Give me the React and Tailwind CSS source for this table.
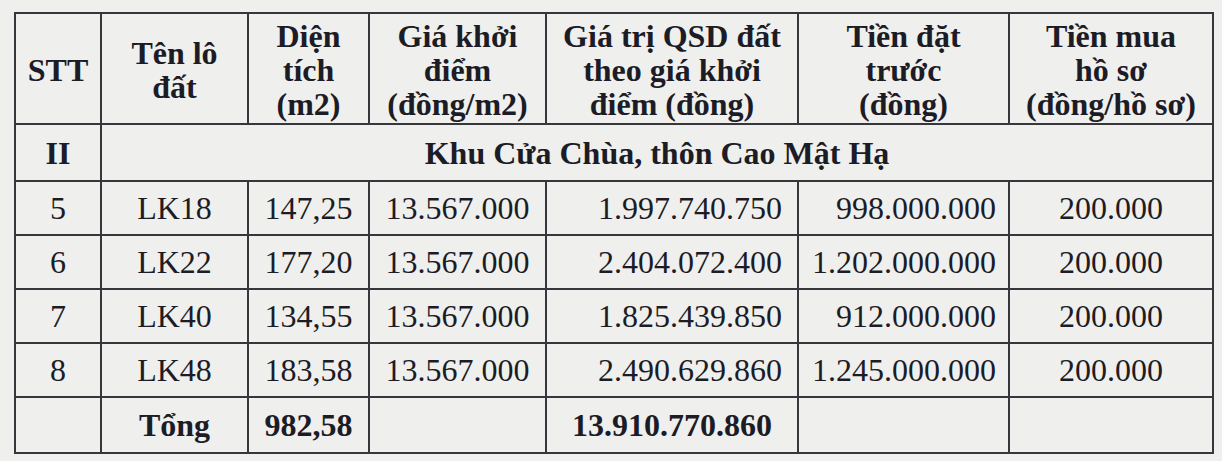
const rows = [
  { stt: '5', lo: 'LK18', dt: '147,25', gia: '13.567.000', qsd: '1.997.740.750', dat: '998.000.000', hs: '200.000' },
  { stt: '6', lo: 'LK22', dt: '177,20', gia: '13.567.000', qsd: '2.404.072.400', dat: '1.202.000.000', hs: '200.000' },
  { stt: '7', lo: 'LK40', dt: '134,55', gia: '13.567.000', qsd: '1.825.439.850', dat: '912.000.000', hs: '200.000' },
  { stt: '8', lo: 'LK48', dt: '183,58', gia: '13.567.000', qsd: '2.490.629.860', dat: '1.245.000.000', hs: '200.000' },
];

const cell = 'border-2 border-[#36363c] p-0';

export default function App() {
  return (
    <div className="w-[1222px] h-[461px] bg-[#efefed] pt-[12px] pl-[14px] text-[#1c1c26] font-[family-name:'Liberation_Serif','Times_New_Roman',serif]">
      <table className="border-collapse table-fixed w-[1198px] text-[32px] leading-[34px]">
        <colgroup>
          <col className="w-[86px]" />
          <col className="w-[147px]" />
          <col className="w-[121px]" />
          <col className="w-[177px]" />
          <col className="w-[252px]" />
          <col className="w-[211px]" />
          <col className="w-[204px]" />
        </colgroup>
        <thead>
          <tr className="h-[111px] font-bold text-center">
            <th className={`${cell} pt-[2px]`}>STT</th>
            <th className={`${cell} pt-[2px]`}>Tên lô<br />đất</th>
            <th className={`${cell} pt-[2px]`}>Diện<br />tích<br />(m2)</th>
            <th className={`${cell} pt-[2px]`}>Giá khởi<br />điểm<br />(đồng/m2)</th>
            <th className={`${cell} pt-[2px]`}>Giá trị QSD đất<br />theo giá khởi<br />điểm (đồng)</th>
            <th className={`${cell} pt-[2px]`}>Tiền đặt<br />trước<br />(đồng)</th>
            <th className={`${cell} pt-[2px]`}>Tiền mua<br />hồ sơ<br />(đồng/hồ sơ)</th>
          </tr>
        </thead>
        <tbody>
          <tr className="h-[57px] font-bold">
            <td className={`${cell} text-center`}>II</td>
            <td className={`${cell} text-center`} colSpan={6}>Khu Cửa Chùa, thôn Cao Mật Hạ</td>
          </tr>
          {rows.map(r => (
            <tr key={r.stt} className="h-[54px]">
              <td className={`${cell} text-center`}>{r.stt}</td>
              <td className={`${cell} text-center`}>{r.lo}</td>
              <td className={`${cell} text-center`}>{r.dt}</td>
              <td className={`${cell} text-center`}>{r.gia}</td>
              <td className={`${cell} text-right pr-[15px]`}>{r.qsd}</td>
              <td className={`${cell} text-right pr-[12px]`}>{r.dat}</td>
              <td className={`${cell} text-center`}>{r.hs}</td>
            </tr>
          ))}
          <tr className="h-[56px] font-bold">
            <td className={cell}></td>
            <td className={`${cell} text-center`}>Tổng</td>
            <td className={`${cell} text-center`}>982,58</td>
            <td className={cell}></td>
            <td className={`${cell} text-center`}>13.910.770.860</td>
            <td className={cell}></td>
            <td className={cell}></td>
          </tr>
        </tbody>
      </table>
    </div>
  );
}
